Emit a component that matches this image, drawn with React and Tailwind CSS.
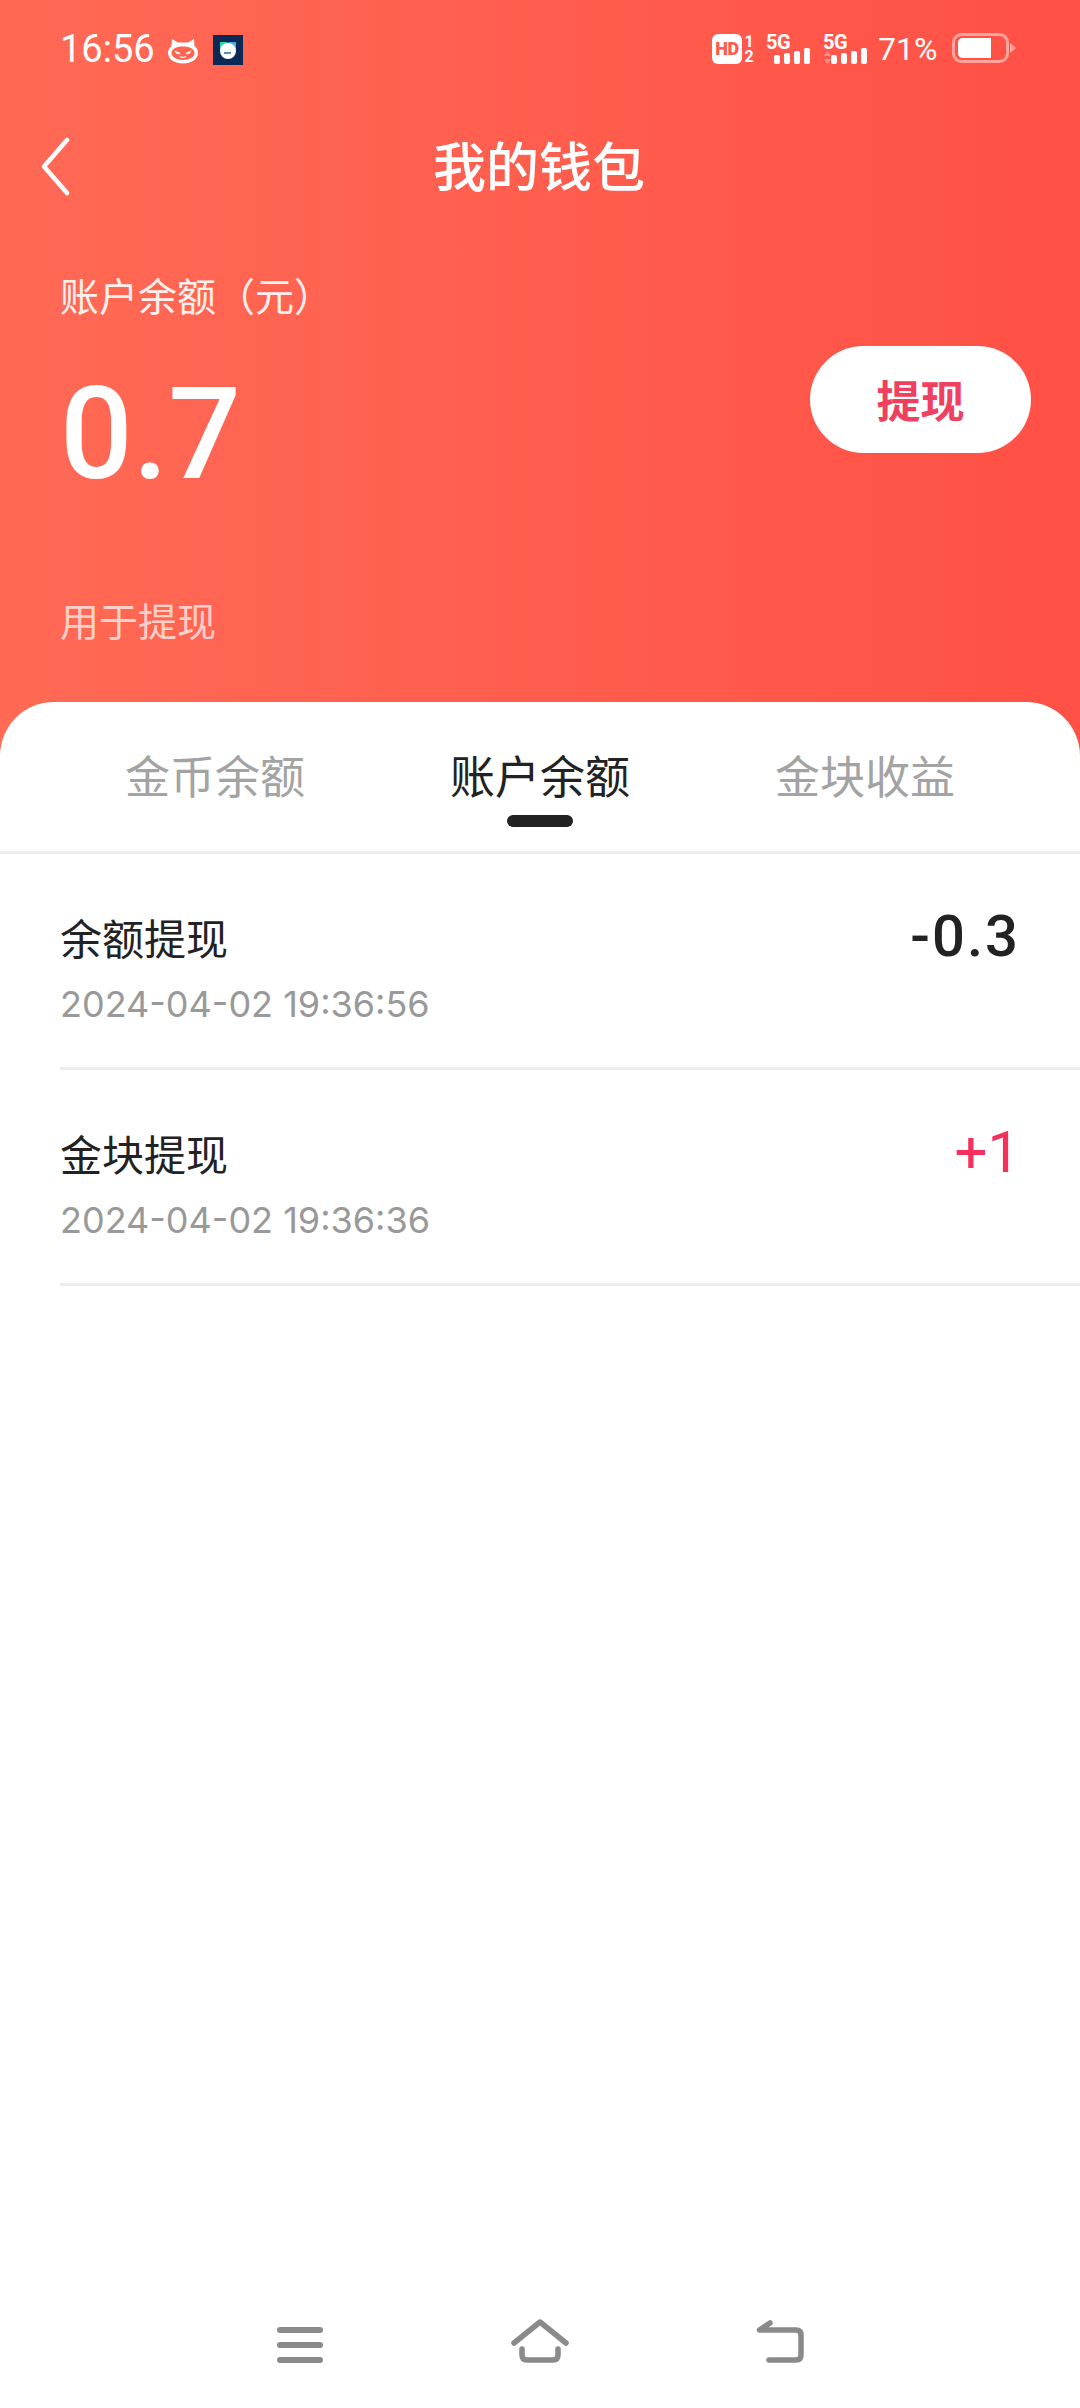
import React from "react";

const sans = "font-['Inter','Noto_Sans_CJK_SC',sans-serif]";
const digits = "font-['Roboto','Noto_Sans_CJK_SC',sans-serif]";

function StatusBar() {
  return (
    <div className="flex h-[98px] items-center justify-between pl-[60px] pr-[64px] text-white">
      <div className="flex items-center">
        <span className={`w-[92px] text-[38px] leading-none ${digits}`}>16:56</span>
        {/* 小猫图标 */}
        <svg className="ml-[16px] mt-[3px]" width="30" height="26" viewBox="0 0 30 26">
          <path d="M4 1l6 3.500h10L26 1l.5 7c2.300 1.800 3.500 4 3.500 7 0 6-6.500 10.500-15 10.500S0 21 0 15c0-3 1.200-5.200 3.500-7z" fill="#fff" />
          <path d="M15 8.500c7 0 11.500 2.500 11.500 6.500S21.500 22 15 22 3.500 19 3.500 15 8 8.500 15 8.500z" fill="#ff6450" />
          <path d="M6.500 12.500l6 2.500c-.5 2-4.500 2-6-2.500zM23.500 12.500l-6 2.500c.5 2 4.500 2 6-2.500z" fill="#fff" />
          <path d="M12 18.500q3 2 6 0" stroke="#fff" strokeWidth="1.500" fill="none" />
        </svg>
        <svg className="ml-[15px] mt-[1px]" width="30" height="30" viewBox="0 0 30 30">
          <rect width="30" height="30" fill="#0a2a55" />
          <path d="M7 7h8l-8 8z" fill="#2fd3a8" />
          <path d="M23 7h-8l8 8z" fill="#4aa8e8" />
          <circle cx="15" cy="16" r="8" fill="#fff" />
          <path d="M11 18h7" stroke="#1f6f9f" strokeWidth="1.500" />
        </svg>
      </div>
      <div className={`flex items-center ${digits}`}>
        <div className="flex h-[30px] w-[30px] items-center justify-center rounded-[6px] bg-white">
          <span className="text-[18px] font-black leading-none tracking-[-0.5px] text-[#ff5a4c]">HD</span>
        </div>
        <div className="ml-[2px] flex w-[10px] flex-col items-center text-[16px] font-bold leading-[15px]">
          <span>1</span>
          <span>2</span>
        </div>
        <Signal />
        <Signal arrows />
        <span className="ml-[11px] w-[57px] text-[32px] leading-none">71%</span>
        <svg className="ml-[17px] -mt-[2px]" width="64" height="30" viewBox="0 0 64 30">
          <rect x="1.500" y="1.500" width="54" height="27" rx="8" fill="none" stroke="#ffa39b" strokeWidth="3" />
          <path d="M11 5h28v20H11q-5 0-5-5V10q0-5 5-5z" fill="#fff" />
          <path d="M58 10l6 5-6 5z" fill="#ffa39b" />
        </svg>
      </div>
    </div>
  );
}

function Signal({ arrows }) {
  return (
    <div className={`relative h-[30px] w-[44px] ${arrows ? "ml-[13px]" : "ml-[12px]"}`}>
      <span className="absolute left-0 top-[-2px] text-[20px] font-bold leading-[20px] tracking-[-0.5px]">5G</span>
      {arrows && (
        <svg className="absolute left-0 top-[17px]" width="9" height="13" viewBox="0 0 9 13">
          <path d="M4.500 0l4 5h-8zM4.500 13l4-5h-8z" fill="#ff8d80" />
        </svg>
      )}
      <div className="absolute bottom-0 right-0 flex items-end gap-[4px]">
        <div className="h-[9px] w-[6px] rounded-[2px] bg-white" />
        <div className="h-[11px] w-[6px] rounded-[2px] bg-white" />
        <div className="h-[13px] w-[6px] rounded-[2px] bg-white" />
        <div className="h-[16px] w-[6px] rounded-[2px] bg-white" />
      </div>
    </div>
  );
}

function Row({ title, time, amount, red }) {
  return (
    <div className="ml-[60px] flex h-[216px] items-start justify-between border-b-[3px] border-[#ededed] pr-[60px]">
      <div className="pt-[61px]">
        <div className="text-[42px] leading-[50px] text-[#222]">{title}</div>
        <div className="mt-[14px] text-[36px] leading-[50px] text-[#999]">{time}</div>
      </div>
      <div className={`pt-[52px] text-[58px] leading-[60px] ${digits} ${red ? "text-[#f6305a]" : "font-medium tracking-[2px] text-[#222]"}`}>
        {amount}
      </div>
    </div>
  );
}

export default function App() {
  return (
    <div className={`flex h-[2408px] w-[1080px] flex-col overflow-hidden bg-white ${sans}`}>
      <div className="h-[760px] shrink-0 bg-gradient-to-r from-[#ff6a55] to-[#ff5046]">
        <StatusBar />
        {/* 상단 타이틀 */}
        <div className="relative mt-[36px] flex h-[68px] items-center justify-center">
          <svg className="absolute left-[38px] top-[3px]" width="36" height="60" viewBox="0 0 36 60">
            <path d="M29 3L6 29.500 29 56" stroke="#fff" strokeWidth="4.500" strokeLinecap="round" strokeLinejoin="round" fill="none" />
          </svg>
          <span className="pr-[2px] text-[53px] font-medium leading-none text-white">我的钱包</span>
        </div>
        <div className="flex items-start justify-between pl-[60px] pr-[49px]">
          <div>
            <div className="mt-[70px] text-[39px] leading-[50px] text-white/90 [text-spacing-trim:space-all]">账户余额（元）</div>
            <div className={`mt-[52px] text-[128px] font-medium leading-[120px] text-white ${digits}`}>0.7</div>
            <div className="mt-[103px] text-[39px] leading-[50px] text-white/70">用于提现</div>
          </div>
          <div className="mt-[144px] flex h-[107px] w-[221px] items-center justify-center rounded-full bg-white pt-[4px] text-[44px] font-bold text-[#f0405f]">
            提现
          </div>
        </div>
      </div>
      <div className="relative -mt-[58px] rounded-t-[54px] bg-white">
        <div className="relative h-[152px] border-b-[3px] border-[#ededed] text-[45px]">
          <div className="flex justify-center gap-[145px] pt-[43px] leading-[66px]">
            <span className="text-[#a3a3a3]">金币余额</span>
            <span className="text-[#222]">账户余额</span>
            <span className="text-[#a3a3a3]">金块收益</span>
          </div>
          <div className="absolute bottom-[24px] left-[507px] h-[12px] w-[66px] rounded-full bg-[#222]" />
        </div>
        <Row title="余额提现" time="2024-04-02 19:36:56" amount="-0.3" />
        <Row title="金块提现" time="2024-04-02 19:36:36" amount="+1" red />
      </div>
      {/* 하단 네비게이션 */}
      <div className="mt-auto flex h-[108px] items-start pl-[277px]">
        <svg className="mt-[26px]" width="48" height="42" viewBox="0 0 48 42" fill="none" stroke="#8a8a8a" strokeWidth="6" strokeLinecap="round">
          <path d="M3 4h40M3 19h40M3 34h40" />
        </svg>
        <svg className="ml-[185px] mt-[18px]" width="60" height="50" viewBox="0 0 60 50" fill="none" stroke="#8a8a8a" strokeWidth="5.500" strokeLinecap="round" strokeLinejoin="round">
          <path d="M4 25L30 4l26 21" />
          <path d="M12 31v6q0 5 5 5h26q5 0 5-5v-6" />
        </svg>
        <svg className="ml-[186px] mt-[18px]" width="50" height="46" viewBox="0 0 50 46" fill="none" stroke="#8a8a8a" strokeWidth="5.500" strokeLinecap="round" strokeLinejoin="round">
          <path d="M14 5L3.500 12H40q5 0 5 5v20q0 5-5 5H13" />
        </svg>
      </div>
    </div>
  );
}
